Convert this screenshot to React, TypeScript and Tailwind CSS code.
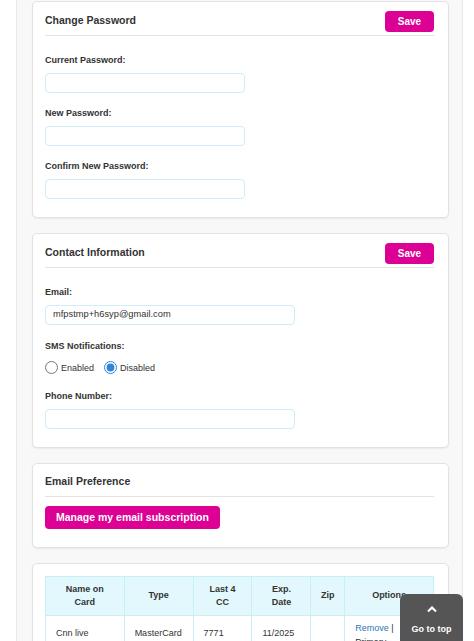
import React from 'react';

const font = { fontFamily: '"Liberation Sans", Arial, sans-serif' };

function SaveButton() {
  return (
    <button className="h-[21px] w-[49px] rounded-[4px] bg-[#dd0094] text-[10px] font-bold text-white">
      Save
    </button>
  );
}

function CardHeader({ title, action }: { title: string; action?: boolean }) {
  return (
    <div className="flex h-[28px] items-center justify-between border-b border-[#e3e3e3] pb-[1px]">
      <h2 className="text-[10.5px] font-bold text-[#333]">{title}</h2>
      {action && <SaveButton />}
    </div>
  );
}

function Field({ label, width, value, first }: { label: string; width: string; value?: string; first?: boolean }) {
  return (
    <div className={first ? '' : 'mt-[15px]'}>
      <label className="mb-[7px] block text-[9px] leading-[11px] font-bold text-[#333]">{label}</label>
      <div className={`${width} flex h-[20px] items-center rounded-[4px] border border-[#cdeef6] bg-white px-[7px] text-[9.3px] text-[#333]`}>
        {value}
      </div>
    </div>
  );
}

function Card({ children, className = '' }: { children: React.ReactNode; className?: string }) {
  return (
    <div className={`w-[417px] rounded-[5px] border border-[#e2e2e2] bg-white pr-[14px] pl-[12px] shadow-[0_1px_2px_rgba(0,0,0,0.06)] ${className}`}>
      {children}
    </div>
  );
}

const cell = 'border border-[#c8eef7] px-[10px] pt-[11px] align-top leading-[13px]';

export default function App() {
  return (
    <div className="relative h-[641px] w-[474px] overflow-hidden bg-white" style={font}>
      <div className="ml-[16px] w-[447px] border-x border-[#e8e8e8] bg-[#f8f8f8] pl-[15px] pt-px">
        <div className="flex flex-col gap-[15px]">
          {/* Change Password */}
          <Card className="pt-[6px] pb-[18px]">
            <CardHeader title="Change Password" action />
            <div className="pt-[19px]">
              <Field first label="Current Password:" width="w-[200px]" />
              <Field label="New Password:" width="w-[200px]" />
              <Field label="Confirm New Password:" width="w-[200px]" />
            </div>
          </Card>

          {/* Contact Information */}
          <Card className="pt-[6px] pb-[18px]">
            <CardHeader title="Contact Information" action />
            <div className="pt-[19px]">
              <Field first label="Email:" width="w-[250px]" value="mfpstmp+h6syp@gmail.com" />
              <div className="mt-[16px]">
                <div className="mb-[7px] text-[9px] leading-[11px] font-bold text-[#333]">SMS Notifications:</div>
                <div className="flex items-center text-[9px] text-[#333]">
                  <label className="flex items-center">
                    <input type="radio" name="sms" className="m-0 h-[13px] w-[13px]" />
                    <span className="ml-[3px] mt-[3px]">Enabled</span>
                  </label>
                  <label className="ml-[10px] flex items-center">
                    <input type="radio" name="sms" defaultChecked className="m-0 h-[13px] w-[13px] accent-[#2f86d8]" />
                    <span className="ml-[3px] mt-[3px]">Disabled</span>
                  </label>
                </div>
              </div>
              <Field label="Phone Number:" width="w-[250px]" />
            </div>
          </Card>

          {/* Email Preference */}
          <Card className="pt-[5px] pb-[18px]">
            <CardHeader title="Email Preference" />
            <div className="pt-[7px]">
              <button className="h-[23px] rounded-[4px] bg-[#dd0094] px-[11px] text-[10.5px] font-bold text-white">
                Manage my email subscription
              </button>
            </div>
          </Card>

          {/* Saved cards */}
          <Card className="pt-[12px] pb-[20px]">
            <table className="w-[389px] border-collapse text-[9px] text-[#333]">
              <thead>
                <tr className="h-[39px] bg-[#e2f8fd]">
                  <th className="w-[79px] border border-[#c8eef7] leading-[13px] font-bold">Name on<br />Card</th>
                  <th className="w-[69px] border border-[#c8eef7] font-bold">Type</th>
                  <th className="w-[59px] border border-[#c8eef7] leading-[13px] font-bold">Last 4<br />CC</th>
                  <th className="w-[59px] border border-[#c8eef7] leading-[13px] font-bold">Exp.<br />Date</th>
                  <th className="w-[34px] border border-[#c8eef7] font-bold">Zip</th>
                  <th className="w-[89px] border border-[#c8eef7] font-bold">Options</th>
                </tr>
              </thead>
              <tbody>
                <tr>
                  <td className={cell}>Cnn live</td>
                  <td className={cell}>MasterCard</td>
                  <td className={cell}>7771</td>
                  <td className={cell}>11/2025</td>
                  <td className={cell}></td>
                  <td className="border border-[#c8eef7] px-[10px] pt-[5px] pb-[8px] align-top leading-[14px]">
                    <a className="text-[#2b78b8]">Remove</a> |<br />Primary
                  </td>
                </tr>
              </tbody>
            </table>
          </Card>
        </div>
      </div>

      {/* Go to top */}
      <div className="absolute right-[11px] bottom-0 flex h-[47px] w-[63px] flex-col items-center rounded-t-[6px] bg-[#555] pt-[11px] text-white">
        <svg width="12" height="8" viewBox="0 0 12 8" fill="none">
          <path d="M2 6.5 L6 2.5 L10 6.5" stroke="white" strokeWidth="2.2" />
        </svg>
        <span className="mt-[10px] text-[9px] font-bold">Go to top</span>
      </div>
    </div>
  );
}
